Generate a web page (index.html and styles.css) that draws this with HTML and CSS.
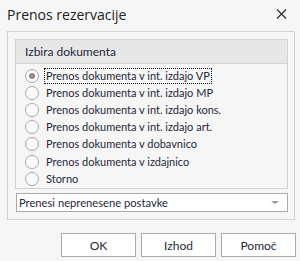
FILE: index.html
```html
<!DOCTYPE html>
<html lang="sl">

<head>
  <meta charset="UTF-8">
  <meta name="viewport" content="width=device-width, initial-scale=1.0">
  <title>Prenos rezervacije</title>
  <link rel="stylesheet" href="styles.css">
</head>

<body>

  <div class="dialog">
    <div class="titlebar">
      <span class="title">Prenos rezervacije</span>
      <svg class="close" width="11" height="10" viewBox="0 0 11 10">
        <path d="M1 0.5 L10 9.5 M10 0.5 L1 9.5" stroke="#333" stroke-width="1.3" fill="none" />
      </svg>
    </div>

    <div class="panel">
      <div class="group">
        <div class="group-header">Izbira dokumenta</div>
        <ul class="options">
          <li class="checked"><span class="radio"></span><span class="label focus">Prenos dokumenta v int. izdajo VP</span></li>
          <li><span class="radio"></span><span class="label">Prenos dokumenta v int. izdajo MP</span></li>
          <li><span class="radio"></span><span class="label">Prenos dokumenta v int. izdajo kons.</span></li>
          <li><span class="radio"></span><span class="label">Prenos dokumenta v int. izdajo art.</span></li>
          <li><span class="radio"></span><span class="label">Prenos dokumenta v dobavnico</span></li>
          <li><span class="radio"></span><span class="label">Prenos dokumenta v izdajnico</span></li>
          <li><span class="radio"></span><span class="label">Storno</span></li>
        </ul>
      </div>
      <div class="combo">
        <span>Prenesi neprenesene postavke</span>
        <span class="arrow"></span>
      </div>
    </div>

    <div class="buttons">
      <button>OK</button>
      <button>Izhod</button>
      <button>Pomoč</button>
    </div>
  </div>

</body>

</html>
```

FILE: styles.css
```css
* {
  margin: 0;
  padding: 0;
  list-style: none;
  box-sizing: border-box;
}

body {
  background: #f6f6f6;
  font-family: Lato, "Liberation Sans", sans-serif;
  font-size: 12px;
  color: #262838;
}

.dialog {
  width: 300px;
  height: 261px;
}

.titlebar {
  height: 31px;
  display: flex;
  align-items: center;
  justify-content: space-between;
  padding: 0 13px 3px 7px;
}

.title {
  font-family: "Open Sans", sans-serif;
  font-size: 14px;
  color: #222;
}

.panel {
  margin-left: 7px;
  width: 288px;
  border: 1px solid #d2d2d2;
  padding: 7px 6px 7px 7px;
}

.group {
  border: 1px solid #d2d2d2;
  height: 150px;
}

.group-header {
  height: 24px;
  background: #e7e7e7;
  border-bottom: 1px solid #d2d2d2;
  padding-left: 9px;
  display: flex;
  align-items: center;
  font-size: 12px;
}

.options {
  padding-top: 3px;
  padding-left: 9px;
}

.options li {
  height: 17.2px;
  display: flex;
  align-items: center;
}

.radio {
  width: 14px;
  height: 14px;
  border: 1px solid #a8a8a8;
  border-radius: 50%;
  background: #fbfbfb;
  margin-right: 5px;
  display: flex;
  align-items: center;
  justify-content: center;
}

.checked .radio::after {
  content: '';
  width: 6px;
  height: 6px;
  border-radius: 50%;
  background: #8c8c8c;
}

.label {
  font-size: 11px;
  line-height: 14px;
  padding: 0 1px;
  border: 1px solid transparent;
}

.label.focus {
  border: 1px dotted #111;
}

.combo {
  margin-top: 4px;
  margin-left: 1px;
  height: 19px;
  background: #fff;
  border: 1px solid #ababab;
  display: flex;
  align-items: center;
  justify-content: space-between;
  padding: 0 8px 0 2px;
  font-size: 11.2px;
}

.arrow {
  width: 0;
  height: 0;
  border-left: 4px solid transparent;
  border-right: 4px solid transparent;
  border-top: 3px solid #9a9a9a;
}

.buttons {
  display: flex;
  justify-content: flex-end;
  gap: 5px;
  padding: 13px 4px 0 0;
}

.buttons button {
  width: 75px;
  height: 24px;
  background: #fff;
  border: 1px solid #ababab;
  font-family: Lato, "Liberation Sans", sans-serif;
  font-size: 12px;
  color: #262838;
}
```
